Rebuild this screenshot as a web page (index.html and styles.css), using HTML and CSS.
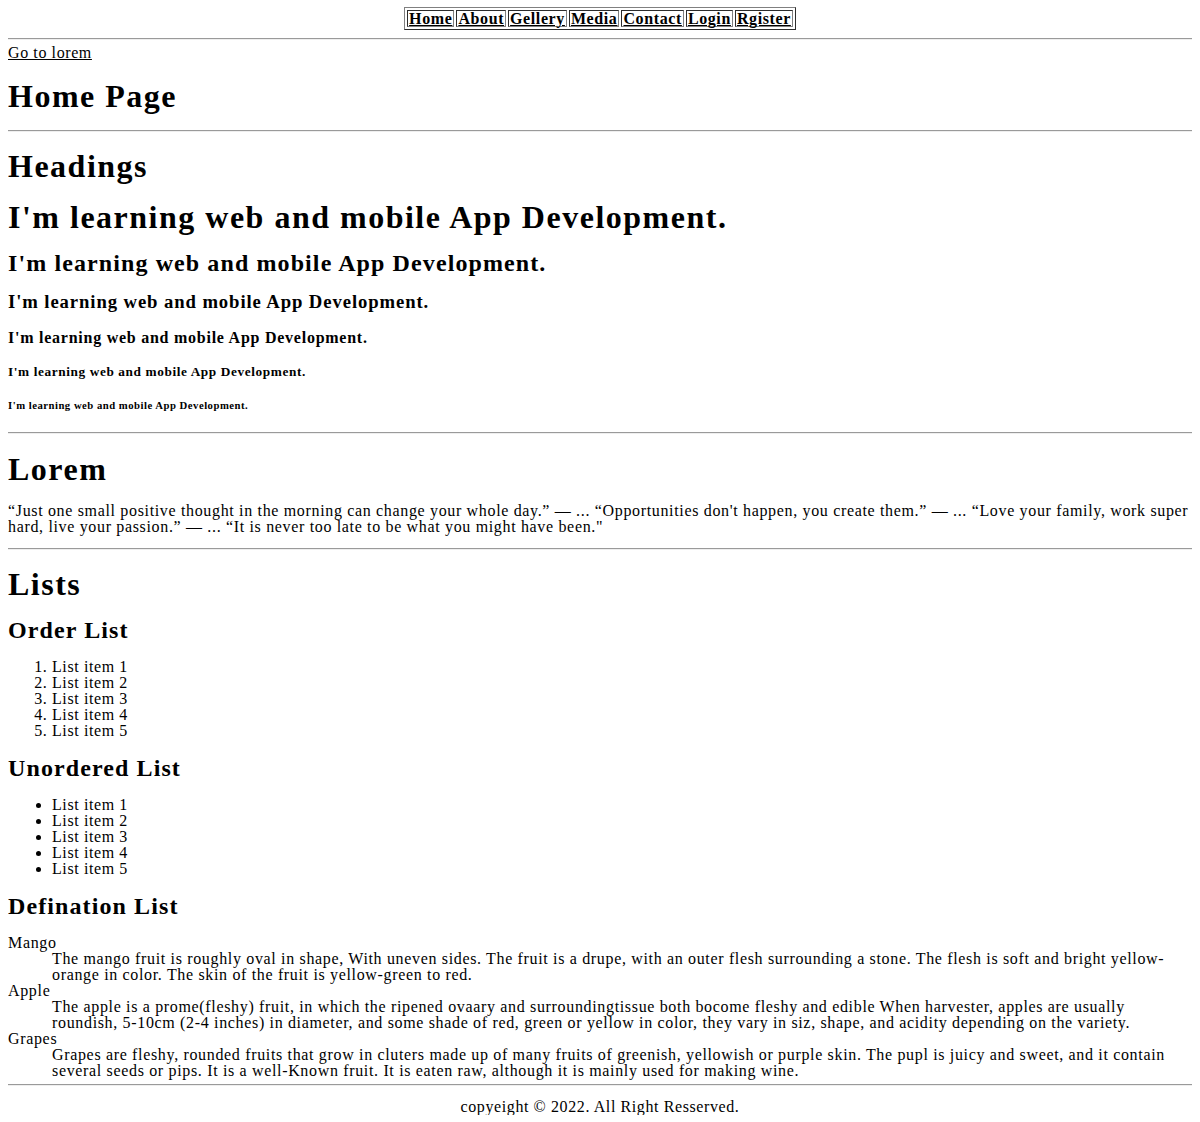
FILE: index.html
```html
<!DOCTYPE html>
<html lang="en">
<head>
<meta charset="utf-8">
<title>Home Page</title>
<link rel="stylesheet" href="styles.css">
</head>
<body>
<nav class="nav">
  <table class="menu">
    <tr>
      <td><a href="#">Home</a></td>
      <td><a href="#">About</a></td>
      <td><a href="#">Gellery</a></td>
      <td><a href="#">Media</a></td>
      <td><a href="#">Contact</a></td>
      <td><a href="#">Login</a></td>
      <td><a href="#">Rgister</a></td>
    </tr>
  </table>
</nav>
<hr class="rule rule-top">
<a class="jump" href="#lorem">Go to lorem</a>
<h1 class="h1">Home Page</h1>
<hr class="rule">
<h1 class="h1">Headings</h1>
<h1 class="h1">I'm learning web and mobile App Development.</h1>
<h2 class="h2">I'm learning web and mobile App Development.</h2>
<h3 class="h3">I'm learning web and mobile App Development.</h3>
<h4 class="h4">I'm learning web and mobile App Development.</h4>
<h5 class="h5">I'm learning web and mobile App Development.</h5>
<h6 class="h6">I'm learning web and mobile App Development.</h6>
<hr class="rule">
<h1 class="h1" id="lorem">Lorem</h1>
<p class="text">“Just one small positive thought in the morning can change your whole day.” — ... “Opportunities don't happen, you create them.” — ... “Love your family, work super hard, live your passion.” — ... “It is never too late to be what you might have been."</p>
<hr class="rule">
<h1 class="h1">Lists</h1>
<h2 class="h2">Order List</h2>
<ol class="list">
  <li>List item 1</li>
  <li>List item 2</li>
  <li>List item 3</li>
  <li>List item 4</li>
  <li>List item 5</li>
</ol>
<h2 class="h2">Unordered List</h2>
<ul class="list">
  <li>List item 1</li>
  <li>List item 2</li>
  <li>List item 3</li>
  <li>List item 4</li>
  <li>List item 5</li>
</ul>
<h2 class="h2">Defination List</h2>
<dl class="defs">
  <dt>Mango</dt>
  <dd>The mango fruit is roughly oval in shape, With uneven sides. The fruit is a drupe, with an outer flesh surrounding a stone. The flesh is soft and bright yellow-orange in color. The skin of the fruit is yellow-green to red.</dd>
  <dt>Apple</dt>
  <dd>The apple is a prome(fleshy) fruit, in which the ripened ovaary and surroundingtissue both bocome fleshy and edible When harvester, apples are usually roundish, 5-10cm (2-4 inches) in diameter, and some shade of red, green or yellow in color, they vary in siz, shape, and acidity depending on the variety.</dd>
  <dt>Grapes</dt>
  <dd>Grapes are fleshy, rounded fruits that grow in cluters made up of many fruits of greenish, yellowish or purple skin. The pupl is juicy and sweet, and it contain several seeds or pips. It is a well-Known fruit. It is eaten raw, although it is mainly used for making wine.</dd>
</dl>
<hr class="rule rule-end">
<footer class="foot">copyeight © 2022. All Right Resserved.</footer>
</body>
</html>
```

FILE: styles.css
```css
html, body {
  background: #fff;
}
body {
  margin: 7px 8px 8px;
  font-family: "Liberation Serif", "Times New Roman", serif;
  font-size: 16px;
  line-height: 16px;
  color: #000;
  letter-spacing: 0.66px;
}
a {
  color: #000;
}
.nav {
  display: flex;
  justify-content: center;
}
.menu {
  border: 1px outset #808080;
  border-spacing: 2px;
  letter-spacing: 0.6px;
}
.menu td {
  border: 1px inset #808080;
  padding: 0 1px;
  font-weight: bold;
  line-height: 15px;
}
.rule {
  margin: 8px 0;
  border: 0;
  border-top: 1px solid #9a9a9a;
  border-bottom: 1px solid #eee;
  height: 0;
}
.rule-top {
  margin-bottom: 5px;
}
.rule-end {
  margin-top: 5px;
}
.jump {
  display: inline-block;
  letter-spacing: 0.6px;
}
.h1 {
  font-size: 32px;
  line-height: 32px;
  margin: 18.5px 0 18px;
  letter-spacing: 1.5px;
}
.h2 {
  font-size: 24px;
  line-height: 24px;
  margin: 17px 0;
  letter-spacing: 1.1px;
}
.h3 {
  font-size: 18.7px;
  line-height: 19px;
  margin: 16px 0;
  letter-spacing: 0.9px;
}
.h4 {
  font-size: 16px;
  line-height: 16px;
  margin: 19px 0;
  letter-spacing: 0.75px;
}
.h5 {
  font-size: 13.3px;
  line-height: 14px;
  margin: 19px 0;
  letter-spacing: 0.6px;
}
.h6 {
  font-size: 10.7px;
  line-height: 11px;
  margin: 21.5px 0 21px;
  letter-spacing: 0.5px;
}
.text {
  margin: 14px 0 13px;
}
.list {
  margin: 16px 0;
  padding-left: 44px;
  letter-spacing: 0.6px;
}
.defs {
  margin: 16px 0 0;
}
.defs dd {
  margin-left: 44px;
}
.foot {
  text-align: center;
  margin-top: 13px;
  letter-spacing: 0.6px;
}
```
